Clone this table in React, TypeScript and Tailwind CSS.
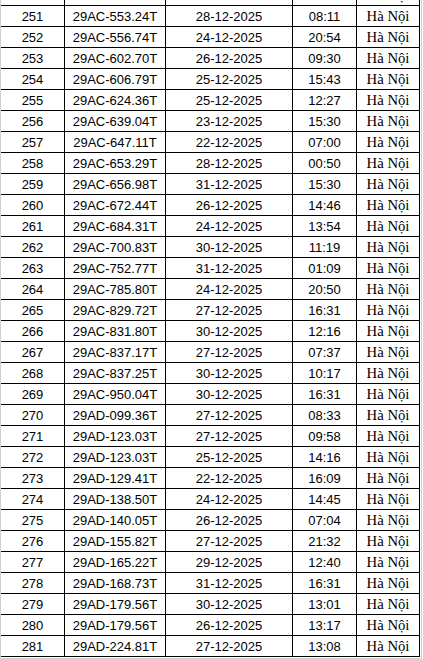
const rows: [number, string, string, string][] = [
  [250, "29AC-474.26T", "23-12-2025", "12:54"],
  [251, "29AC-553.24T", "28-12-2025", "08:11"],
  [252, "29AC-556.74T", "24-12-2025", "20:54"],
  [253, "29AC-602.70T", "26-12-2025", "09:30"],
  [254, "29AC-606.79T", "25-12-2025", "15:43"],
  [255, "29AC-624.36T", "25-12-2025", "12:27"],
  [256, "29AC-639.04T", "23-12-2025", "15:30"],
  [257, "29AC-647.11T", "22-12-2025", "07:00"],
  [258, "29AC-653.29T", "28-12-2025", "00:50"],
  [259, "29AC-656.98T", "31-12-2025", "15:30"],
  [260, "29AC-672.44T", "26-12-2025", "14:46"],
  [261, "29AC-684.31T", "24-12-2025", "13:54"],
  [262, "29AC-700.83T", "30-12-2025", "11:19"],
  [263, "29AC-752.77T", "31-12-2025", "01:09"],
  [264, "29AC-785.80T", "24-12-2025", "20:50"],
  [265, "29AC-829.72T", "27-12-2025", "16:31"],
  [266, "29AC-831.80T", "30-12-2025", "12:16"],
  [267, "29AC-837.17T", "27-12-2025", "07:37"],
  [268, "29AC-837.25T", "30-12-2025", "10:17"],
  [269, "29AC-950.04T", "30-12-2025", "16:31"],
  [270, "29AD-099.36T", "27-12-2025", "08:33"],
  [271, "29AD-123.03T", "27-12-2025", "09:58"],
  [272, "29AD-123.03T", "25-12-2025", "14:16"],
  [273, "29AD-129.41T", "22-12-2025", "16:09"],
  [274, "29AD-138.50T", "24-12-2025", "14:45"],
  [275, "29AD-140.05T", "26-12-2025", "07:04"],
  [276, "29AD-155.82T", "27-12-2025", "21:32"],
  [277, "29AD-165.22T", "29-12-2025", "12:40"],
  [278, "29AD-168.73T", "31-12-2025", "16:31"],
  [279, "29AD-179.56T", "30-12-2025", "13:01"],
  [280, "29AD-179.56T", "26-12-2025", "13:17"],
  [281, "29AD-224.81T", "27-12-2025", "13:08"],
];

const sans = "font-['Liberation_Sans',sans-serif] text-[13px]";

export default function App() {
  return (
    <div className="relative w-[423px] h-[659px] overflow-hidden bg-white border-l border-[#d0d0d0] text-black">
      <div className="flex">
        <div className="w-[419px] mt-[-15px]">
          {rows.map(([stt, plate, date, time]) => (
            <div key={stt} className="flex h-[21px] border-b border-black leading-[21px]">
              <div className={`w-[64px] border-r border-black text-center ${sans}`}>{stt}</div>
              <div className={`w-[101px] border-r border-black text-center ${sans}`}>{plate}</div>
              <div className={`w-[127px] border-r border-black text-center ${sans}`}>{date}</div>
              <div className={`w-[64px] border-r border-black text-center ${sans}`}>{time}</div>
              <div className="w-[63px] border-r border-black text-center font-['Liberation_Serif',serif] text-[14.7px] leading-[20px]">
                Hà Nội
              </div>
            </div>
          ))}
          <div className="h-[1px]" />
          <div className="h-[1px] bg-[#d0d0d0]" />
        </div>
        <div className="w-[1px]" />
        <div className="w-[1px] h-[659px] bg-[#d0d0d0]" />
      </div>
    </div>
  );
}
